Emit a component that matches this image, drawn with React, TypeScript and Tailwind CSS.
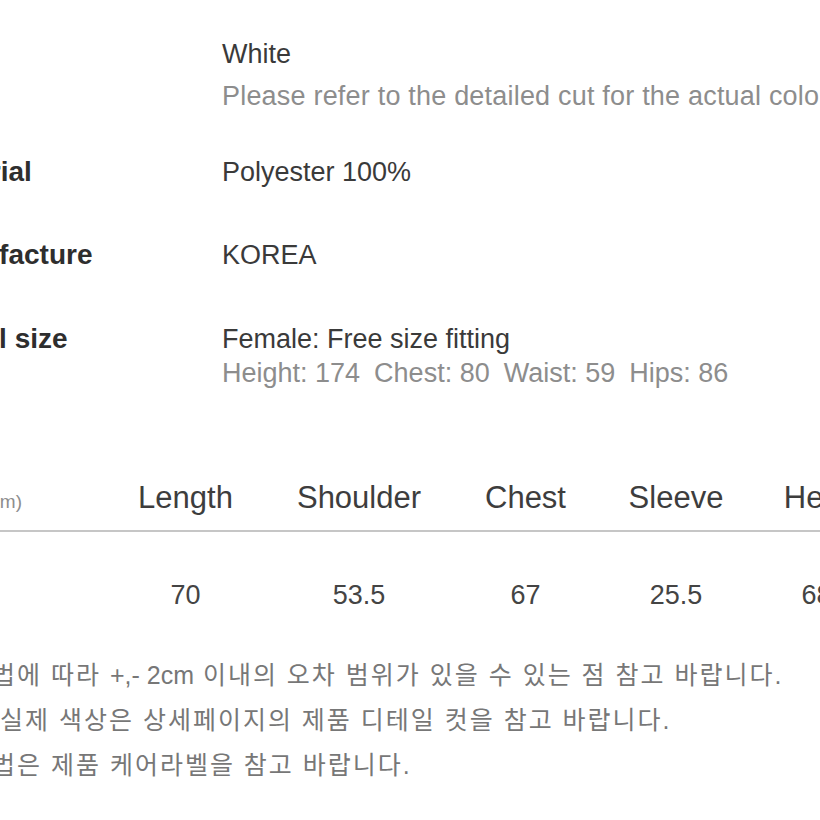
import React from 'react';

const font = { fontFamily: '"Liberation Sans", "Noto Sans CJK KR", sans-serif' };

const columns = [
  { name: 'Length', value: '70', width: 'w-[159px]' },
  { name: 'Shoulder', value: '53.5', width: 'w-[188px]' },
  { name: 'Chest', value: '67', width: 'w-[145px]' },
  { name: 'Sleeve', value: '25.5', width: 'w-[156px]' },
  { name: 'Hem', value: '68', width: 'w-[125px]' },
];

function InfoRow({
  label,
  className,
  children,
}: {
  label: string;
  className?: string;
  children: React.ReactNode;
}) {
  return (
    <div className={`flex items-baseline ${className ?? ''}`}>
      <div className="w-[296px] shrink-0 text-[28px] font-bold text-[#2e2e2e]">{label}</div>
      <div className="flex-1 whitespace-nowrap">{children}</div>
    </div>
  );
}

export default function App() {
  return (
    <div className="h-[820px] w-[820px] overflow-hidden bg-white" style={font}>
      <div className="-ml-[74px] w-[1100px]">
        {/* product info */}
        <div className="pt-[33px]">
          <InfoRow label="Color">
            <p className="text-[27px] leading-[42px] text-[#3a3a3a]">White</p>
            <p className="text-[27px] leading-[42px] tracking-[0.2px] text-[#8d8d8d]">
              Please refer to the detailed cut for the actual color
            </p>
          </InfoRow>

          <InfoRow label="Material" className="mt-[34px]">
            <p className="text-[27px] leading-[42px] text-[#3a3a3a]">Polyester 100%</p>
          </InfoRow>

          <InfoRow label="Manufacture" className="mt-[41px]">
            <p className="text-[27px] leading-[42px] text-[#3a3a3a]">KOREA</p>
          </InfoRow>

          <InfoRow label="Model size" className="mt-[42px]">
            <p className="text-[27px] leading-[34px] text-[#3a3a3a]">Female: Free size fitting</p>
            <p className="flex gap-[14px] text-[27px] leading-[34px] text-[#8d8d8d]">
              <span>Height: 174</span>
              <span>Chest: 80</span>
              <span>Waist: 59</span>
              <span>Hips: 86</span>
            </p>
          </InfoRow>
        </div>

        {/* size table */}
        <div className="mt-[88px]">
          <div className="flex items-baseline border-b-[2px] border-[#c6c6c6] pb-[12px]">
            <div className="w-[180px] shrink-0 pr-[84px] text-right text-[19px] text-[#8d8d8d]">
              Size (cm)
            </div>
            {columns.map((c) => (
              <div
                key={c.name}
                className={`${c.width} shrink-0 text-center text-[31px] leading-[40px] text-[#3d3d3d]`}
              >
                {c.name}
              </div>
            ))}
          </div>
          <div className="flex pt-[42px]">
            <div className="w-[180px] shrink-0" />
            {columns.map((c) => (
              <div
                key={c.name}
                className={`${c.width} shrink-0 text-center text-[27px] leading-[42px] text-[#444]`}
              >
                {c.value}
              </div>
            ))}
          </div>
        </div>

        {/* notes */}
        <div className="mt-[37px] whitespace-nowrap text-[25px] leading-[45px] tracking-[2px] text-[#777]">
          <p className="ml-[66px]">
            법에 따라 <span className="tracking-normal">+,- 2cm</span> 이내의 오차 범위가 있을 수 있는 점 참고 바랍니다.
          </p>
          <p className="ml-[74px]">실제 색상은 상세페이지의 제품 디테일 컷을 참고 바랍니다.</p>
          <p className="ml-[66px]">법은 제품 케어라벨을 참고 바랍니다.</p>
        </div>
      </div>
    </div>
  );
}
